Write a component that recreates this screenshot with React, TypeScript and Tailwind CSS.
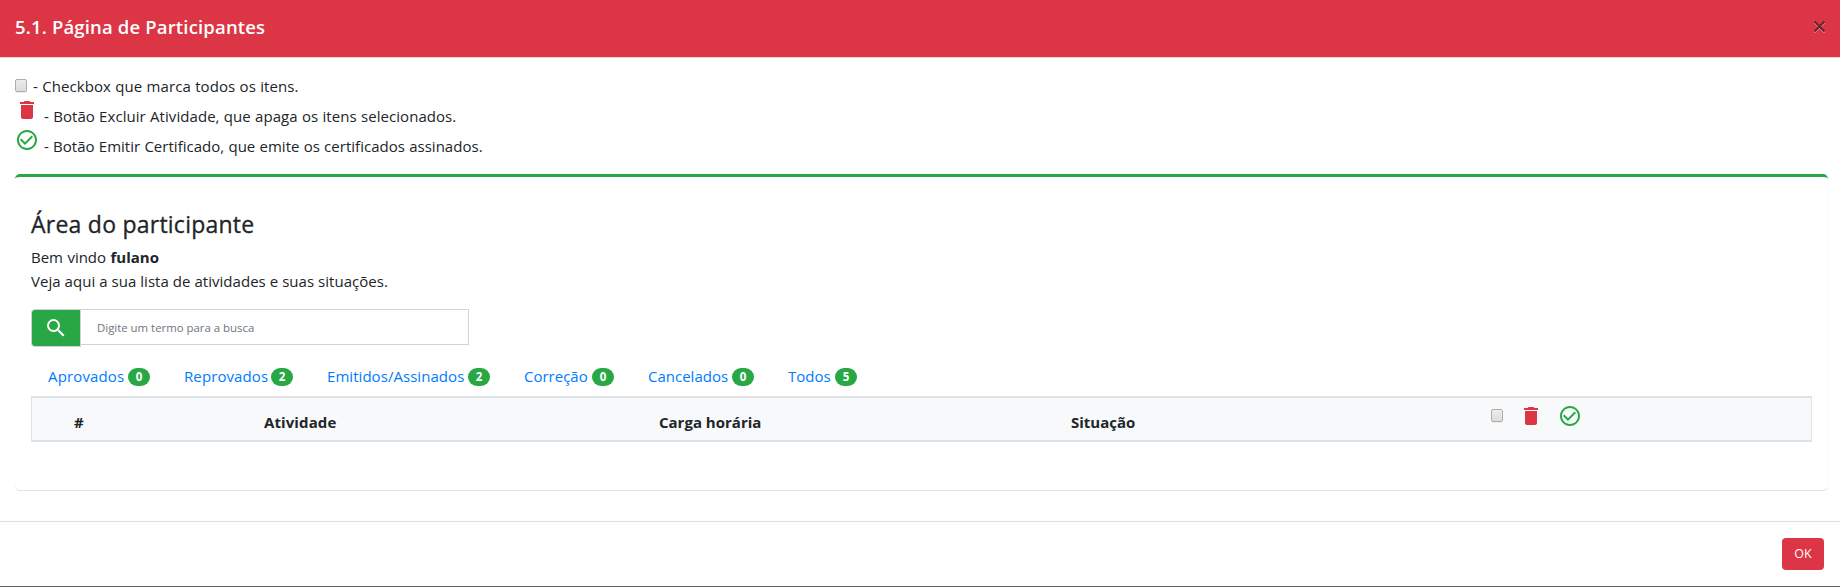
import React from "react";
import { MdCheckCircleOutline, MdDelete, MdSearch } from "react-icons/md";

const tabs = [
  { label: "Aprovados", count: 0, box: "w-[136px]", text: "w-[80px] tracking-[0.15px]" },
  { label: "Reprovados", count: 2, box: "w-[143px]", text: "w-[87px] tracking-[0.1px]" },
  { label: "Emitidos/Assinados", count: 2, box: "w-[197px]", text: "w-[141px] tracking-[0.05px]" },
  { label: "Correção", count: 0, box: "w-[124px]", text: "w-[68px]" },
  { label: "Cancelados", count: 0, box: "w-[140px]", text: "w-[84px]" },
  { label: "Todos", count: 5, box: "w-[69px]", text: "w-[47px]" },
];

function Checkbox() {
  return (
    <span
      role="checkbox"
      aria-checked="false"
      className="block h-[13px] w-[12px] shrink-0 rounded-[2px] border border-[#adadad] bg-linear-to-b from-[#ededed] to-[#dcdcdc] shadow-[0_1px_0_#ececec]"
    />
  );
}

export default function App() {
  return (
    <div className="flex h-[587px] w-full flex-col overflow-hidden border-b border-[#646464] bg-white font-['Open_Sans',sans-serif] text-[15px] leading-6 text-[#212529]">
      <header className="flex h-[58px] shrink-0 items-start justify-between border-b border-[#f3d5d8] bg-[#dc3545] pl-[15px] pr-[14px] text-white">
        <h5 className="pt-3 text-[18.5px] font-semibold leading-[30px] tracking-[0.16px] whitespace-nowrap">5.1. Página de Participantes</h5>
        <button aria-label="Fechar" className="mt-5">
          <svg width="13" height="14" viewBox="0 0 13 14" fill="none">
            <path d="M1.5 2.5l10 10M11.5 2.5l-10 10" stroke="#f3a9b0" strokeWidth="1.7" />
            <path d="M1.5 1.5l10 10M11.5 1.5l-10 10" stroke="#66232a" strokeWidth="2" />
          </svg>
        </button>
      </header>

      <main className="flex h-[464px] shrink-0 flex-col border-b border-[#dfe0e1] pl-[15px] pr-3 pt-4">
        <div className="flex h-6 items-start">
          <div className="pt-[5px]"><Checkbox /></div>
          <span className="pl-[6px] tracking-[0.08px] whitespace-nowrap [word-spacing:0.3px]">- Checkbox que marca todos os itens.</span>
        </div>
        <div className="flex h-[30px] items-start">
          <MdDelete className="size-6 text-[#dc3545]" />
          <span className="pl-[5px] pt-1.5 tracking-[0.06px] whitespace-nowrap [word-spacing:0.3px]">- Botão Excluir Atividade, que apaga os itens selecionados.</span>
        </div>
        <div className="flex h-[30px] items-start">
          <MdCheckCircleOutline className="size-6 text-[#28a745]" />
          <span className="pl-[5px] pt-1.5 tracking-[0.02px] whitespace-nowrap [word-spacing:0.3px]">- Botão Emitir Certificado, que emite os certificados assinados.</span>
        </div>

        <section className="mt-4 h-[316px] rounded-[5px] border-t-[3px] border-[#28a745] px-4 pt-[33px] shadow-[0_1px_1px_rgba(0,0,0,0.12)]">
          <h4 className="text-[23px] font-medium leading-[29px] tracking-[0.24px] [-webkit-text-stroke:0.3px_#212529]">Área do participante</h4>
          <p className="mt-1.5 [word-spacing:0.5px]">Bem vindo <b>fulano</b></p>
          <p className="tracking-[0.04px]">Veja aqui a sua lista de atividades e suas situações.</p>

          <div className="mt-4 flex h-[37px] items-start">
            <button aria-label="Buscar" className="flex h-[38px] w-[50px] shrink-0 items-center justify-center rounded-l-[4px] border border-[#ced4da] bg-[#28a745] text-white">
              <MdSearch className="size-6" />
            </button>
            <input
              placeholder="Digite um termo para a busca"
              className="h-9 w-[388px] border border-l-0 border-[#ced4da] px-4 pt-px text-[11.4px] placeholder:text-[#6c757d]"
            />
          </div>

          <nav className="mt-[18px] flex h-6 pl-[17px] text-[#007bff]">
            {tabs.map((t) => (
              <a key={t.label} className={`flex shrink-0 items-start whitespace-nowrap ${t.box}`}>
                <span className={`shrink-0 ${t.text}`}>{t.label}</span>
                <span className="mt-1 flex h-[18px] w-[22px] shrink-0 items-center justify-center rounded-full bg-[#28a745] text-[11.5px] font-bold text-white">{t.count}</span>
              </a>
            ))}
          </nav>

          <div className="mt-2 flex h-[46px] items-start border-x border-y-2 border-[#dee2e6] bg-[#f8f9fa] font-bold whitespace-nowrap">
            <span className="w-[190px] pl-[42px] pt-3">#</span>
            <span className="w-[395px] pl-[42px] pt-3 tracking-[0.1px]">Atividade</span>
            <span className="w-[412px] pl-[42px] pt-3">Carga horária</span>
            <span className="w-[420px] pl-[42px] pt-3">Situação</span>
            <div className="flex items-start pl-[42px] pt-[6px]">
              <div className="pt-[5px]"><Checkbox /></div>
              <MdDelete className="ml-4 size-6 text-[#dc3545]" />
              <MdCheckCircleOutline className="ml-[15px] size-6 text-[#28a745]" />
            </div>
          </div>
        </section>
      </main>

      <footer className="flex grow items-start justify-end pr-4 pt-4">
        <button className="h-8 w-[42px] rounded-[4px] bg-[#dc3545] text-[12.5px] text-white">OK</button>
      </footer>
    </div>
  );
}
